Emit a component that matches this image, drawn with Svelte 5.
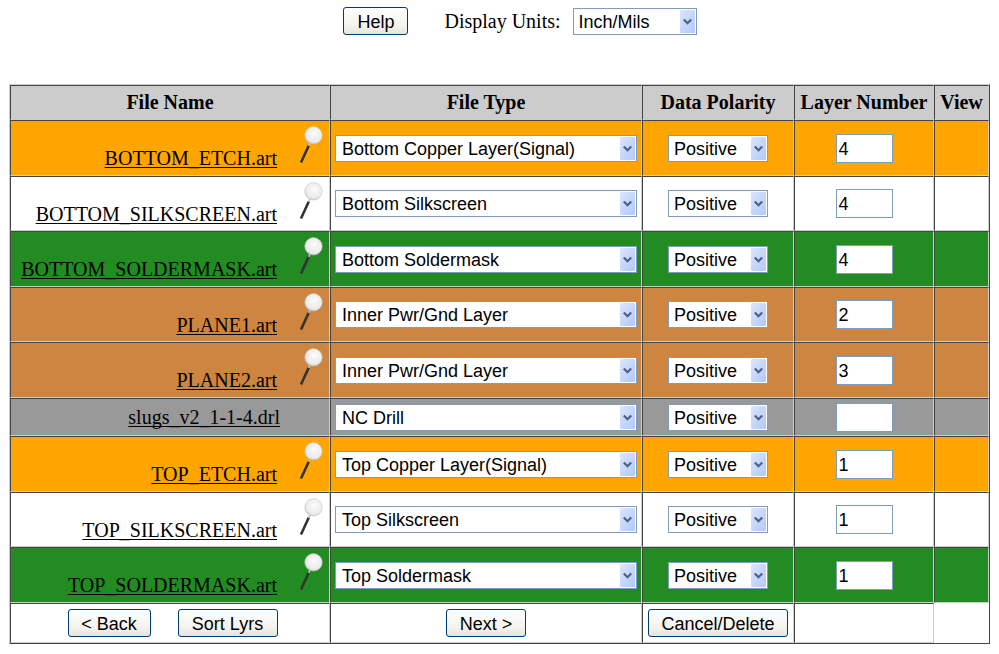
<script>
  const fileTypes = [
    'Top Copper Layer(Signal)',
    'Bottom Copper Layer(Signal)',
    'Inner Pwr/Gnd Layer',
    'Top Silkscreen',
    'Bottom Silkscreen',
    'Top Soldermask',
    'Bottom Soldermask',
    'NC Drill'
  ];

  let units = $state('Inch/Mils');
  let files = $state([
    { name: 'BOTTOM_ETCH.art', type: 'Bottom Copper Layer(Signal)', layer: '4', kind: 'etch' },
    { name: 'BOTTOM_SILKSCREEN.art', type: 'Bottom Silkscreen', layer: '4', kind: 'silk' },
    { name: 'BOTTOM_SOLDERMASK.art', type: 'Bottom Soldermask', layer: '4', kind: 'mask' },
    { name: 'PLANE1.art', type: 'Inner Pwr/Gnd Layer', layer: '2', kind: 'plane' },
    { name: 'PLANE2.art', type: 'Inner Pwr/Gnd Layer', layer: '3', kind: 'plane' },
    { name: 'slugs_v2_1-1-4.drl', type: 'NC Drill', layer: '', kind: 'drill' },
    { name: 'TOP_ETCH.art', type: 'Top Copper Layer(Signal)', layer: '1', kind: 'etch' },
    { name: 'TOP_SILKSCREEN.art', type: 'Top Silkscreen', layer: '1', kind: 'silk' },
    { name: 'TOP_SOLDERMASK.art', type: 'Top Soldermask', layer: '1', kind: 'mask' }
  ].map((f) => ({ ...f, polarity: 'Positive' })));
</script>

{#snippet arrow()}
  <svg class="arrow" viewBox="0 0 15 23" width="15" height="23" aria-hidden="true">
    <defs>
      <linearGradient id="face" x1="0" y1="0" x2="1" y2="1">
        <stop offset="0" stop-color="#dce6fd" />
        <stop offset="1" stop-color="#b0c8fb" />
      </linearGradient>
    </defs>
    <rect width="15" height="23" rx="1" fill="url(#face)" />
    <path d="M3.8 9.5 L7.5 13.2 L11.2 9.5" fill="none" stroke="#4d6185" stroke-width="2.2" />
  </svg>
{/snippet}

<form onsubmit={(e) => e.preventDefault()}>
  <div class="toolbar">
    <button type="button" class="help">Help</button>
    <label for="units">Display Units:</label>
    <span class="pick units">
      <select id="units" bind:value={units}>
        <option>Inch/Mils</option>
        <option>Metric</option>
      </select>
      {@render arrow()}
    </span>
  </div>

  <table>
    <colgroup>
      <col class="c-name" />
      <col class="c-type" />
      <col class="c-polarity" />
      <col class="c-layer" />
      <col class="c-view" />
    </colgroup>
    <thead>
      <tr>
        <th>File Name</th>
        <th>File Type</th>
        <th>Data Polarity</th>
        <th>Layer Number</th>
        <th>View</th>
      </tr>
    </thead>
    <tbody>
      {#each files as file (file.name)}
        <tr class={file.kind}>
          <td>
            <div class="file">
              <a href={'#' + file.name}>{file.name}</a>
              {#if file.kind !== 'drill'}
                <svg class="lens" viewBox="0 0 27 46" width="27" height="46" aria-hidden="true">
                  <defs>
                    <radialGradient id="glass" cx="0.55" cy="0.4" r="0.6">
                      <stop offset="0" stop-color="#fff" />
                      <stop offset="0.3" stop-color="#f4f4f4" />
                      <stop offset="0.8" stop-color="#ebebeb" />
                      <stop offset="1" stop-color="#ccc" />
                    </radialGradient>
                  </defs>
                  <path d="M10.8 20.5 L3 37.5" stroke="#333" stroke-width="2.6" />
                  <path d="M11.8 18 L10.8 21" stroke="#bbb" stroke-width="1.6" />
                  <circle cx="15.5" cy="10.3" r="8.7" fill="url(#glass)" stroke="#c4c4c4" stroke-width="0.6" />
                </svg>
              {/if}
            </div>
          </td>
          <td>
            <span class="pick">
              <select aria-label={'File type of ' + file.name} bind:value={file.type}>
                {#each fileTypes as type}
                  <option>{type}</option>
                {/each}
              </select>
              {@render arrow()}
            </span>
          </td>
          <td>
            <span class="pick polarity">
              <select aria-label={'Data polarity of ' + file.name} bind:value={file.polarity}>
                <option>Positive</option>
                <option>Negative</option>
              </select>
              {@render arrow()}
            </span>
          </td>
          <td>
            <input type="text" aria-label={'Layer number of ' + file.name} bind:value={file.layer} />
          </td>
          <td></td>
        </tr>
      {/each}
    </tbody>
    <tfoot>
      <tr>
        <td>
          <div class="actions first">
            <button type="button" class="back">&lt; Back</button>
            <button type="button" class="sort">Sort Lyrs</button>
          </div>
        </td>
        <td><div class="actions"><button type="submit" class="next">Next &gt;</button></div></td>
        <td><div class="actions"><button type="button" class="cancel">Cancel/Delete</button></div></td>
        <td></td>
      </tr>
    </tfoot>
  </table>
</form>

<style>
  :global(body) {
    background: #fff;
  }

  form {
    padding: 7px 9px;
    font-family: 'Liberation Serif', 'Times New Roman', serif;
    font-size: 20px;
    line-height: 24px;
    color: #000;
  }

  .toolbar {
    display: flex;
    justify-content: center;
    align-items: center;
    padding-left: 41px;
    margin-bottom: 49px;
  }

  .toolbar label {
    margin: 0 12px 0 36px;
  }

  button,
  select,
  input {
    box-sizing: border-box;
    margin: 0;
    font-family: 'Liberation Sans', Arial, sans-serif;
    font-size: 18px;
    line-height: 22px;
    color: #000;
  }

  button {
    height: 28px;
    padding: 1px 0 0;
    border: 1px solid #003c74;
    border-radius: 3px;
    background: linear-gradient(#fff, #f3f2ed 70%, #e6e3d9);
    white-space: nowrap;
  }

  .help { width: 65px; }
  .back { width: 83px; }
  .sort { width: 100px; }
  .next { width: 80px; }
  .cancel { width: 140px; }

  .pick {
    position: relative;
    display: block;
  }

  .pick select {
    display: block;
    width: 100%;
    height: 27px;
    padding: 1px 20px 0 6px;
    border: 1px solid #7f9db9;
    border-radius: 0;
    background: #fff;
    appearance: none;
  }

  .pick.units {
    width: 124px;
  }

  .pick.units select,
  .pick.polarity select {
    padding-left: 5px;
  }

  .pick.polarity {
    width: 100px;
    margin: 0 auto;
  }

  .arrow {
    position: absolute;
    top: 2px;
    right: 2px;
    pointer-events: none;
  }

  input {
    display: block;
    width: 57px;
    height: 29px;
    margin: 0 auto;
    padding: 2px 2px 0;
    border: 1px solid #7f9db9;
    background: #fff;
  }

  table {
    width: 100%;
    table-layout: fixed;
    border-collapse: separate;
    border-spacing: 0;
    border: 1px solid;
    border-color: #ccc #444 #444 #ccc;
  }

  .c-name { width: 320px; }
  .c-type { width: 312px; }
  .c-polarity { width: 152px; }
  .c-layer { width: 140px; }
  .c-view { width: 55px; }

  th,
  td {
    box-sizing: border-box;
    padding: 0 4px;
    border: 1px solid;
    border-color: #444 #ccc #ccc #444;
    vertical-align: middle;
  }

  th {
    height: 35px;
    padding: 0 0 2px;
    background: #ccc;
    font-weight: bold;
    text-align: center;
    white-space: nowrap;
  }

  tbody td {
    height: 56px;
  }

  tbody tr:nth-child(even) td {
    height: 55px;
  }

  tbody tr.drill td {
    height: 38px;
  }

  tfoot td {
    height: 40px;
  }

  .etch { background: #ffa500; }
  .silk { background: #fff; }
  .mask { background: #228b22; }
  .plane { background: #cd853f; }
  .drill { background: #999; }

  .file {
    display: flex;
    justify-content: flex-end;
    align-items: flex-end;
    gap: 21px;
  }

  .file a {
    padding-bottom: 4px;
    color: #000;
    text-decoration: underline;
    text-decoration-thickness: 1px;
    text-decoration-skip-ink: none;
    text-underline-offset: 2px;
    line-height: 18px;
  }

  .drill .file {
    padding-right: 45px;
  }

  .drill .file a {
    padding-bottom: 0;
  }

  .lens {
    display: block;
    flex: none;
  }

  .actions {
    display: flex;
    justify-content: center;
    gap: 27px;
  }

  .actions.first {
    padding-left: 5px;
  }
</style>
